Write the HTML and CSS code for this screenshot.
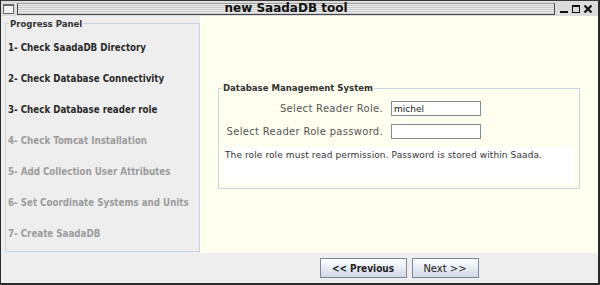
FILE: index.html
```html
<!DOCTYPE html>
<html>
<head>
<meta charset="utf-8">
<link rel="stylesheet" href="styles.css">
</head>
<body>
<div class="window">
  <div class="titlebar">
    <span class="menu-btn"></span>
    <div class="title"><span>new SaadaDB tool</span></div>
    <svg class="controls" width="40" height="12" viewBox="0 0 40 12">
      <rect x="2" y="8" width="8" height="2" fill="#111"/>
      <rect x="14.5" y="2.5" width="7" height="7" fill="none" stroke="#111" stroke-width="1"/>
      <rect x="14" y="2" width="8" height="2" fill="#111"/>
      <path d="M26.5 2.5 L33.5 9.5 M33.5 2.5 L26.5 9.5" stroke="#111" stroke-width="2.2"/>
    </svg>
  </div>
  <div class="main">
    <div class="left">
      <fieldset class="progress">
        <legend>Progress Panel</legend>
        <div class="step">1- Check SaadaDB Directory</div>
        <div class="step">2- Check Database Connectivity</div>
        <div class="step">3- Check Database reader role</div>
        <div class="step off">4- Check Tomcat Installation</div>
        <div class="step off">5- Add Collection User Attributes</div>
        <div class="step off">6- Set Coordinate Systems and Units</div>
        <div class="step off">7- Create SaadaDB</div>
      </fieldset>
    </div>
    <div class="right">
      <div class="content">
        <fieldset class="dbms">
          <legend>Database Management System</legend>
          <div class="form">
            <label class="lbl">Select Reader Role.</label>
            <input class="field" type="text" value="michel">
            <label class="lbl">Select Reader Role password.</label>
            <input class="field" type="text" value="">
          </div>
          <div class="info">The role role must read permission. Password is stored within Saada.</div>
        </fieldset>
      </div>
      <div class="footer">
        <button class="btn bold">&lt;&lt; Previous</button>
        <button class="btn">Next &gt;&gt;</button>
      </div>
    </div>
  </div>
</div>
</body>
</html>
```

FILE: styles.css
```css
* { box-sizing: border-box; }
html, body { margin: 0; padding: 0; background: #eeeeee; }
body { font-family: "DejaVu Sans", sans-serif; }

.window {
  width: 600px;
  height: 285px;
  border-top: 1px solid #3a3a3a;
  border-left: 1px solid #2a2a2a;
  border-right: 2px solid #2a2a2a;
  border-bottom: 2px solid #2a2a2a;
  background: #eeeeee;
  display: flex;
  flex-direction: column;
}

.titlebar {
  height: 15px;
  display: flex;
  align-items: center;
  background: #dcdcdc;
  padding-left: 2px;
}
.menu-btn {
  width: 11px;
  height: 10px;
  border: 1px solid #6a6a6a;
  border-top-width: 2px;
  background: #f2f2f2;
  margin-right: 3px;
}
.title {
  width: 538px;
  height: 12px;
  border: 1px solid #4a4a4a;
  border-top-color: #9a9a9a;
  background: repeating-linear-gradient(to bottom, #ececec 0 1px, #c9c9c9 1px 2px);
  display: flex;
  align-items: center;
  justify-content: center;
  font-weight: bold;
  font-size: 12px;
  color: #111;
  line-height: 11px;
}
.controls { margin-left: 3px; }

.main {
  flex: 1;
  display: flex;
}
.left {
  width: 199px;
  padding-left: 4px;
  padding-top: 2px;
}
.progress {
  margin: 0;
  width: 195px;
  border: 1px solid #c6d4e2;
  padding: 3px 0 2px 2px;
  background: #eeeeee;
}
.progress legend {
  font-family: "DejaVu Sans Condensed", "DejaVu Sans", sans-serif;
  font-size: 9.5px;
  font-weight: bold;
  color: #333;
  line-height: 11px;
  padding: 0 1px;
  margin-left: 1px;
}
.step {
  height: 31px;
  line-height: 31px;
  font-family: "DejaVu Sans Condensed", "DejaVu Sans", sans-serif;
  font-size: 9.7px;
  font-weight: bold;
  color: #2a2a2a;
  white-space: nowrap;
}
.step.off { color: #9c9c9c; }

.right {
  width: 398px;
  display: flex;
  flex-direction: column;
}
.content {
  height: 237px;
  background: #ffffef;
  padding: 66px 18px 0 18px;
}
.dbms {
  margin: 0;
  border: 1px solid #c9d6e2;
  padding: 0 5px 5px 3px;
}
.dbms legend {
  font-family: "DejaVu Sans Condensed", "DejaVu Sans", sans-serif;
  font-size: 9.5px;
  font-weight: bold;
  color: #333;
  line-height: 12px;
  padding: 0 1px;
}
.form {
  margin-top: 7px;
  display: grid;
  grid-template-columns: 161px 90px;
  column-gap: 8px;
  row-gap: 8px;
  align-items: center;
}
.lbl {
  text-align: right;
  font-size: 10px;
  letter-spacing: 0.3px;
  color: #555;
  white-space: nowrap;
}
.field {
  width: 90px;
  height: 15px;
  border: 1px solid #7f8d9c;
  background: #fff;
  font-family: "DejaVu Sans", sans-serif;
  font-size: 9px;
  color: #222;
  padding: 0 2px;
  margin: 0;
  outline: none;
}
.info {
  margin-top: 8px;
  height: 36px;
  background: #ffffff;
  font-size: 9px;
  letter-spacing: 0.1px;
  line-height: 14px;
  padding: 1px 0 0 3px;
  color: #333;
  white-space: nowrap;
}

.footer {
  flex: 1;
  display: flex;
  justify-content: center;
  align-items: flex-start;
  padding-top: 5px;
  gap: 5px;
}
.btn {
  height: 20px;
  border: 1px solid #7a8a9a;
  background: linear-gradient(to bottom, #ffffff 0%, #e9eef5 45%, #cfdbe8 100%);
  font-family: "DejaVu Sans", sans-serif;
  font-size: 10px;
  color: #222;
  padding: 0;
  width: 67px;
  margin: 0;
}
.btn.bold {
  font-family: "DejaVu Sans Condensed", "DejaVu Sans", sans-serif;
  font-weight: bold;
  width: 87px;
}
```
